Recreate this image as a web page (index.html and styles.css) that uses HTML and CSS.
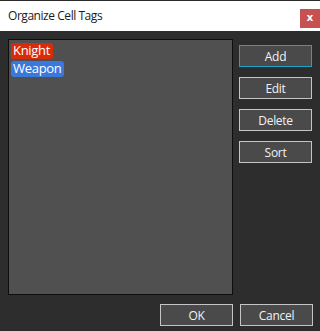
FILE: index.html
```html
<!DOCTYPE html>
<html lang="en">
<head>
  <meta charset="UTF-8" />
  <title>Organize Cell Tags</title>
  <link rel="stylesheet" href="styles.css">
</head>
<body>

<div class="dialog">
  <div class="title-bar">
    <span class="title">Organize Cell Tags</span>
    <button class="close-btn">x</button>
  </div>

  <div class="content">
    <div class="main-row">
      <div class="tag-list">
        <span class="tag tag-red">Knight</span>
        <span class="tag tag-blue">Weapon</span>
      </div>
      <div class="side-buttons">
        <button class="btn btn-focus">Add</button>
        <button class="btn">Edit</button>
        <button class="btn">Delete</button>
        <button class="btn">Sort</button>
      </div>
    </div>

    <div class="footer-buttons">
      <button class="btn">OK</button>
      <button class="btn">Cancel</button>
    </div>
  </div>
</div>

</body>
</html>
```

FILE: styles.css
```css
:root {
  --bg: #2d2d2d;
  --list-bg: #505050;
  --btn-bg: #4a4a4a;
  --btn-border: #c4c4c4;
  --focus: #1ea3c4;
  --text: #f2f2f2;
}

* {
  box-sizing: border-box;
}

html, body {
  margin: 0;
  height: 100%;
}

body {
  background: var(--bg);
  font-family: "Open Sans", "Noto Sans", sans-serif;
  font-size: 12px;
  color: var(--text);
}

.dialog {
  width: 320px;
  height: 331px;
  border-top: 1px solid #2b2b2b;
  display: flex;
  flex-direction: column;
}

.title-bar {
  height: 30px;
  background: #ffffff;
  color: #1a1a1a;
  display: flex;
  align-items: center;
  justify-content: space-between;
  padding-left: 8px;
}

.title {
  font-size: 12px;
  letter-spacing: -0.45px;
  margin-top: -2px;
}

.close-btn {
  width: 20px;
  height: 19px;
  margin-top: 4px;
  background: #c75050;
  color: #ffffff;
  border: none;
  padding: 0 0 3px;
  font-family: "Open Sans", sans-serif;
  font-size: 11px;
  font-weight: 700;
  line-height: 1;
}

.content {
  flex: 1;
  padding: 8px 7px 5px 8px;
  display: flex;
  flex-direction: column;
}

.main-row {
  display: flex;
  gap: 6px;
}

.tag-list {
  width: 225px;
  height: 256px;
  background: var(--list-bg);
  border: 1px solid #0e0e0e;
  padding: 3px 2px;
  display: flex;
  flex-direction: column;
  align-items: flex-start;
  gap: 2px;
}

.tag {
  height: 16px;
  line-height: 15px;
  padding: 0 3px 0 2px;
  border-radius: 3px;
  font-size: 13px;
  letter-spacing: -0.3px;
  color: #ffffff;
}

.tag-red {
  background: #d92a0c;
}

.tag-blue {
  background: #3a78dc;
}

.side-buttons {
  display: flex;
  flex-direction: column;
  gap: 10px;
  padding-top: 6px;
}

.btn {
  width: 73px;
  height: 22px;
  background: var(--btn-bg);
  border: 1px solid var(--btn-border);
  color: var(--text);
  font-family: "Open Sans", "Noto Sans", sans-serif;
  font-size: 12px;
  letter-spacing: -0.3px;
  padding: 0;
}

.btn-focus {
  border-color: var(--focus);
}

.footer-buttons {
  display: flex;
  justify-content: flex-end;
  gap: 7px;
  margin-top: 9px;
}
```
